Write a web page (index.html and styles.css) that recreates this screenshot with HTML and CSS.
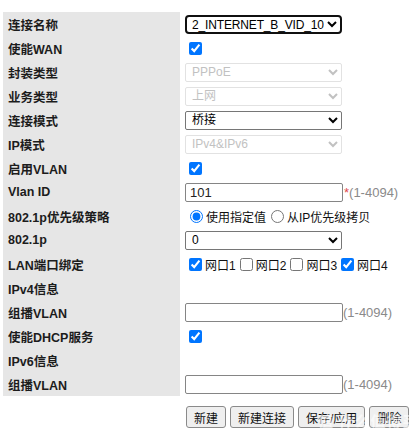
FILE: index.html
```html
<!DOCTYPE html>
<html lang="zh-CN">
<head>
<meta charset="utf-8">
<title>WAN 配置</title>
<link rel="stylesheet" href="styles.css">
</head>
<body>
<div class="page">
  <div class="form">
    <div class="label">连接名称</div>
    <div class="value">
      <select class="sel focus"><option>2_INTERNET_B_VID_101</option></select>
    </div>

    <div class="label">使能WAN</div>
    <div class="value"><input type="checkbox" checked></div>

    <div class="label">封装类型</div>
    <div class="value"><select class="sel" disabled><option>PPPoE</option></select></div>

    <div class="label">业务类型</div>
    <div class="value"><select class="sel" disabled><option>上网</option></select></div>

    <div class="label">连接模式</div>
    <div class="value"><select class="sel"><option>桥接</option></select></div>

    <div class="label">IP模式</div>
    <div class="value"><select class="sel" disabled><option>IPv4&amp;IPv6</option></select></div>

    <div class="label">启用VLAN</div>
    <div class="value"><input type="checkbox" checked></div>

    <div class="label">Vlan ID</div>
    <div class="value"><input class="txt" type="text" value="101"><span class="req">*</span><span class="hint">(1-4094)</span></div>

    <div class="label">802.1p优先级策略</div>
    <div class="value">
      <label class="opt"><input type="radio" name="p" checked>使用指定值</label>
      <label class="opt"><input type="radio" name="p">从IP优先级拷贝</label>
    </div>

    <div class="label">802.1p</div>
    <div class="value"><select class="sel"><option>0</option></select></div>

    <div class="label">LAN端口绑定</div>
    <div class="value">
      <label class="opt"><input type="checkbox" checked>网口1</label>
      <label class="opt"><input type="checkbox">网口2</label>
      <label class="opt"><input type="checkbox"> 网口3</label>
      <label class="opt"><input type="checkbox" checked>网口4</label>
    </div>

    <div class="label">IPv4信息</div>
    <div class="value"></div>

    <div class="label">组播VLAN</div>
    <div class="value"><input class="txt" type="text"><span class="hint">(1-4094)</span></div>

    <div class="label">使能DHCP服务</div>
    <div class="value"><input type="checkbox" checked></div>

    <div class="label">IPv6信息</div>
    <div class="value"></div>

    <div class="label">组播VLAN</div>
    <div class="value"><input class="txt" type="text"><span class="hint">(1-4094)</span></div>
  </div>

  <div class="actions">
    <button class="btn">新建</button>
    <button class="btn">新建连接</button>
    <button class="btn">保存/应用</button>
    <button class="btn">删除</button>
  </div>

  <div class="watermark">值 什么值得买</div>
</div>
</body>
</html>
```

FILE: styles.css
```css
* { box-sizing: border-box; }

html, body {
  margin: 0;
  padding: 0;
  background: #ffffff;
}

body {
  font-family: "Liberation Sans", "Noto Sans CJK SC", sans-serif;
  color: #1a1a1a;
}

.page {
  position: relative;
  width: 412px;
  height: 435px;
  padding: 12px 0 0 3px;
  overflow: hidden;
}

.form {
  display: grid;
  grid-template-columns: 177px 1fr;
  grid-auto-rows: 24px;
  column-gap: 5px;
}

.label {
  background: #e6e6e6;
  display: flex;
  align-items: center;
  padding-left: 5px;
  font-family: "Liberation Sans", "Noto Sans CJK SC", sans-serif;
  font-weight: bold;
  font-size: 12.5px;
  color: #1c1c1c;
  white-space: nowrap;
}

.value {
  display: flex;
  align-items: center;
  font-size: 12px;
  white-space: nowrap;
}

.sel {
  width: 157px;
  height: 19px;
  font-family: "Liberation Sans", "Noto Sans CJK SC", sans-serif;
  font-size: 12px;
  line-height: 15px;
  padding: 0 0 0 2px;
  margin: 0;
  border: 1px solid #767676;
  border-radius: 2px;
  background: #fff;
  color: #000;
}

.sel:disabled {
  color: #a8a8a8;
  border-color: #d6d6d6;
  background: #fff;
}

.sel.focus {
  border: 2px solid #101010;
  border-radius: 4px;
  padding-left: 1px;
  letter-spacing: -0.15px;
}

input[type="checkbox"] {
  width: 13px;
  height: 13px;
  margin: 3px 3px 3px 4px;
}

input[type="radio"] {
  width: 13px;
  height: 13px;
  margin: 0 3px 0 5px;
}

.opt {
  display: inline-flex;
  align-items: center;
  font-family: "Liberation Sans", "Noto Sans CJK SC", sans-serif;
  font-size: 12px;
  color: #111;
}

.txt {
  width: 158px;
  height: 19px;
  margin: 0;
  padding: 0 4px;
  font-family: "Liberation Sans", sans-serif;
  font-size: 13px;
  border: 1px solid #858585;
  border-radius: 2px;
  color: #222;
}

.req {
  color: #e0474c;
  font-size: 13px;
  margin-left: 1px;
}

.hint {
  color: #8a8a8a;
  font-size: 13px;
  font-family: "Liberation Sans", sans-serif;
}

.actions {
  display: flex;
  gap: 4px;
  margin-top: 10px;
  padding-left: 183px;
}

.btn {
  flex: none;
  height: 22px;
  padding: 0 7px;
  margin: 0;
  font-family: "Liberation Sans", "Noto Sans CJK SC", sans-serif;
  font-size: 12px;
  white-space: nowrap;
  color: #111;
  background: #efefef;
  border: 1px solid #8a8a8a;
  border-radius: 3px;
}

.watermark {
  position: absolute;
  left: 318px;
  top: 410px;
  font-family: "Noto Sans CJK SC", sans-serif;
  font-weight: bold;
  font-size: 15px;
  letter-spacing: 1px;
  color: rgba(255, 255, 255, 0.6);
  white-space: nowrap;
}
```
